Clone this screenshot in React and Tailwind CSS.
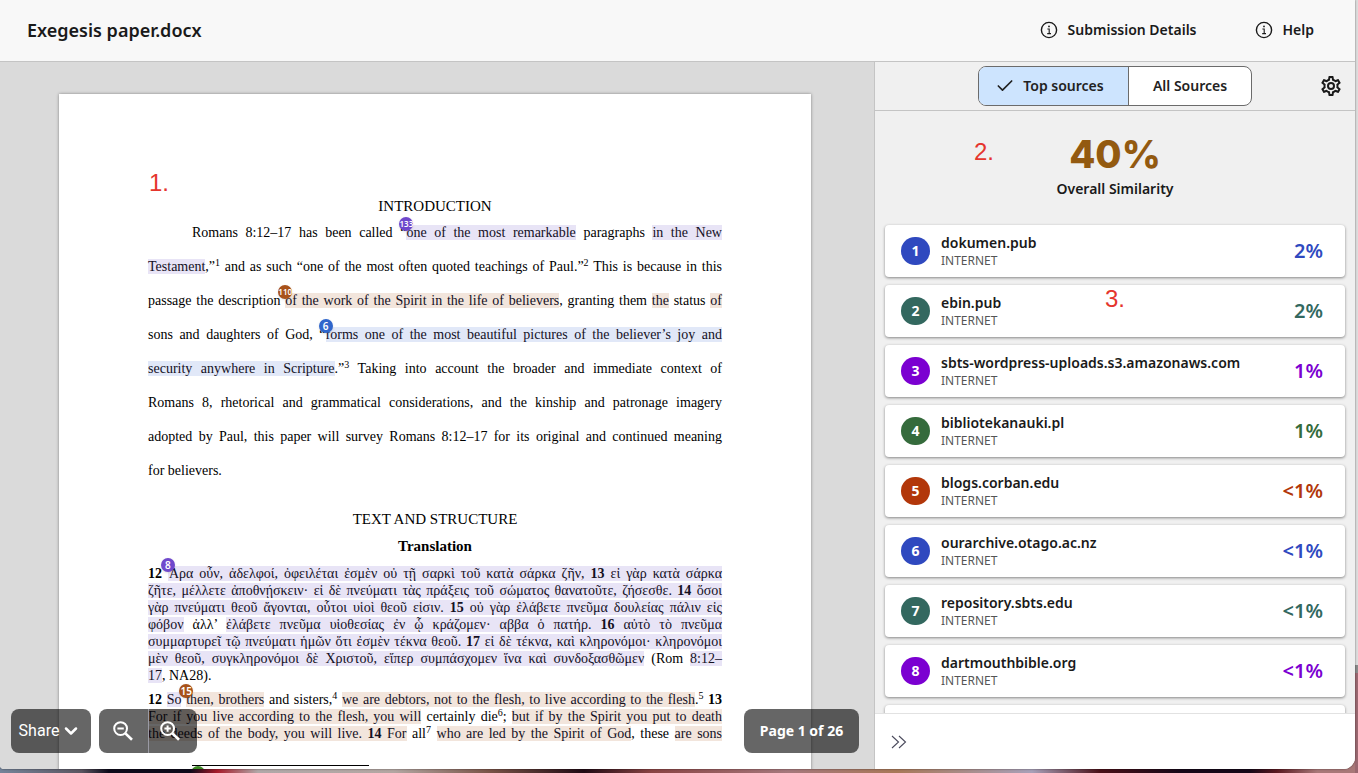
import React from "react";
import { ChevronDown, Check } from "lucide-react";

const SOURCES = [
  { id: 1, name: "dokumen.pub", pct: "2%", dot: "bg-[#2f49bf]", text: "text-[#2f49bf]" },
  { id: 2, name: "ebin.pub", pct: "2%", dot: "bg-[#33685f]", text: "text-[#33685f]" },
  { id: 3, name: "sbts-wordpress-uploads.s3.amazonaws.com", pct: "1%", dot: "bg-[#7b00d1]", text: "text-[#7b00d1]" },
  { id: 4, name: "bibliotekanauki.pl", pct: "1%", dot: "bg-[#356b3c]", text: "text-[#356b3c]" },
  { id: 5, name: "blogs.corban.edu", pct: "<1%", dot: "bg-[#b2370a]", text: "text-[#b2370a]" },
  { id: 6, name: "ourarchive.otago.ac.nz", pct: "<1%", dot: "bg-[#2f49bf]", text: "text-[#2f49bf]" },
  { id: 7, name: "repository.sbts.edu", pct: "<1%", dot: "bg-[#33685f]", text: "text-[#33685f]" },
  { id: 8, name: "dartmouthbible.org", pct: "<1%", dot: "bg-[#7b00d1]", text: "text-[#7b00d1]" },
];

const TONES = {
  purple: "bg-[#e8e4f6]",
  brown: "bg-[#f2e5dc]",
  blue: "bg-[#e1e8f8]",
};

function Mark({ tone, children }) {
  return <mark className={`text-[#14101f] ${TONES[tone]}`}>{children}</mark>;
}

// numbered marker that hangs over the first letter of a match
function Badge({ n, color }) {
  return (
    <span className="relative">
      <button
        className={`absolute -top-px left-0 z-10 flex size-[14px] -translate-x-1/2 -translate-y-1/2 items-center justify-center rounded-full font-['Noto_Sans',sans-serif] leading-none font-semibold text-white shadow-sm ${
          n > 99 ? "text-[8px]" : "text-[10px]"
        } ${color}`}
      >
        {n}
      </button>
    </span>
  );
}

function Line({ children, tall, indent, last }) {
  return (
    <div
      className={`whitespace-nowrap ${tall ? "leading-[34px]" : "leading-[17px]"} ${indent ? "pl-11" : ""} ${
        last ? "text-left" : "text-justify [text-align-last:justify]"
      }`}
    >
      {children}
    </div>
  );
}

function Sup({ children }) {
  return <sup className="text-[10px] leading-none">{children}</sup>;
}

function InfoIcon() {
  return (
    <svg viewBox="0 0 18 18" className="size-[18px]" fill="none" stroke="currentColor">
      <circle cx="9" cy="9" r="7.6" strokeWidth="1.4" />
      <path d="M7.4 8h1.8v4.5M7.2 12.6h3.8" strokeWidth="1.1" />
      <circle cx="9" cy="5.4" r=".9" fill="currentColor" stroke="none" />
    </svg>
  );
}

function GearIcon() {
  return (
    <svg viewBox="0 0 24 24" className="size-6" fill="currentColor">
      <path d="M19.43 12.98c.04-.32.07-.64.07-.98s-.03-.66-.07-.98l2.11-1.65c.19-.15.24-.42.12-.64l-2-3.46a.5.5 0 0 0-.61-.22l-2.49 1a7.3 7.3 0 0 0-1.69-.98l-.38-2.65A.49.49 0 0 0 14 2h-4a.49.49 0 0 0-.49.42l-.38 2.65c-.61.25-1.17.59-1.69.98l-2.49-1a.5.5 0 0 0-.61.22l-2 3.46a.49.49 0 0 0 .12.64l2.11 1.65c-.04.32-.07.65-.07.98s.03.66.07.98l-2.11 1.65a.49.49 0 0 0-.12.64l2 3.46c.12.22.39.3.61.22l2.49-1c.52.4 1.08.73 1.69.98l.38 2.65c.03.24.24.42.49.42h4c.25 0 .46-.18.49-.42l.38-2.65c.61-.25 1.17-.59 1.69-.98l2.49 1c.23.09.49 0 .61-.22l2-3.46a.49.49 0 0 0-.12-.64zm-1.98-1.71c.04.31.05.52.05.73s-.02.43-.05.73l-.14 1.13.89.7 1.08.84-.7 1.21-1.27-.51-1.04-.42-.9.68c-.43.32-.84.56-1.25.73l-1.06.43-.16 1.13-.2 1.35h-1.4l-.19-1.35-.16-1.13-1.06-.43a5.7 5.7 0 0 1-1.23-.71l-.91-.7-1.06.43-1.27.51-.7-1.21 1.08-.84.89-.7-.14-1.13a7 7 0 0 1-.05-.74c0-.2.02-.43.05-.73l.14-1.13-.89-.7-1.08-.84.7-1.21 1.27.51 1.04.42.9-.68c.43-.32.84-.56 1.25-.73l1.06-.43.16-1.13.2-1.35h1.39l.19 1.35.16 1.13 1.06.43c.43.18.83.41 1.23.71l.91.7 1.06-.43 1.27-.51.7 1.21-1.07.85-.89.7zM12 8a4 4 0 1 0 0 8 4 4 0 0 0 0-8m0 6a2 2 0 1 1 0-4 2 2 0 0 1 0 4" />
    </svg>
  );
}

function ZoomIcon({ plus }) {
  return (
    <svg viewBox="0 0 20 20" className="size-5" fill="none" stroke="currentColor" strokeWidth="2">
      <circle cx="7.6" cy="7.6" r="6.4" />
      <path d="M12.4 12.4l6.6 6.4" strokeWidth="2.6" />
      <path d={plus ? "M4.4 7.6h6.4M7.6 4.4v6.4" : "M4.4 7.6h6.4"} />
    </svg>
  );
}

function Paper() {
  return (
    <article className="relative mt-8 mr-[63px] ml-[59px] h-[1000px] min-w-0 flex-1 bg-white px-[89px] pt-[103px] font-['Liberation_Serif',serif] text-sm text-black shadow-[0_0_3px_rgba(0,0,0,0.4)]">
      <span className="absolute top-[75px] left-[90px] font-['Liberation_Sans',sans-serif] text-2xl leading-7 text-[#e5352d]">1.</span>

      <h2 className="text-center text-[15px] leading-[19px]">INTRODUCTION</h2>
      <section>
        <Line tall indent>
          Romans 8:12–17 has been called “<Badge n={133} color="bg-[#6f48cc]" />
          <Mark tone="purple">one of the most remarkable</Mark> paragraphs <Mark tone="purple">in the New</Mark>
        </Line>
        <Line tall>
          <Mark tone="purple">Testament</Mark>,”<Sup>1</Sup> and as such “one of the most often quoted teachings of Paul.”<Sup>2</Sup> This is because in this
        </Line>
        <Line tall>
          passage the description <Badge n={110} color="bg-[#a8521a]" />
          <Mark tone="brown">of the work of the Spirit in the life of believers</Mark>, granting them <Mark tone="brown">the</Mark> status <Mark tone="brown">of</Mark>
        </Line>
        <Line tall>
          sons and daughters of God, “<Badge n={6} color="bg-[#2f66cc]" />
          <Mark tone="blue">forms one of the most beautiful pictures of the believer’s joy and</Mark>
        </Line>
        <Line tall>
          <Mark tone="blue">security anywhere in Scripture</Mark>.”<Sup>3</Sup> Taking into account the broader and immediate context of
        </Line>
        <Line tall>Romans 8, rhetorical and grammatical considerations, and the kinship and patronage imagery</Line>
        <Line tall>adopted by Paul, this paper will survey Romans 8:12–17 for its original and continued meaning</Line>
        <Line tall last>for believers.</Line>
      </section>

      <h2 className="mt-[23px] text-center text-[15px] leading-[17px]">TEXT AND STRUCTURE</h2>
      <h3 className="mt-[10px] text-center text-[15px] leading-[17px] font-bold">Translation</h3>

      <section className="mt-[10px]" lang="el">
        <Line>
          <b>12</b> <Badge n={8} color="bg-[#6f48cc]" />
          <Mark tone="purple">Ἄρα οὖν, ἀδελφοί, ὀφειλέται ἐσμὲν οὐ τῇ σαρκὶ τοῦ κατὰ σάρκα ζῆν, <b>13</b> εἰ γὰρ κατὰ σάρκα</Mark>
        </Line>
        <Line>
          <Mark tone="purple">ζῆτε, μέλλετε ἀποθνῄσκειν· εἰ δὲ πνεύματι τὰς πράξεις τοῦ σώματος θανατοῦτε, ζήσεσθε. <b>14</b> ὅσοι</Mark>
        </Line>
        <Line>
          <Mark tone="purple">γὰρ πνεύματι θεοῦ ἄγονται, οὗτοι υἱοὶ θεοῦ εἰσιν. <b>15</b> οὐ γὰρ ἐλάβετε πνεῦμα δουλείας πάλιν εἰς</Mark>
        </Line>
        <Line>
          <Mark tone="purple">φόβον</Mark> ἀλλ’ <Mark tone="purple">ἐλάβετε πνεῦμα υἱοθεσίας ἐν ᾧ κράζομεν· αββα ὁ πατήρ. <b>16</b> αὐτὸ τὸ πνεῦμα</Mark>
        </Line>
        <Line>
          <Mark tone="purple">συμμαρτυρεῖ τῷ πνεύματι ἡμῶν ὅτι ἐσμὲν τέκνα θεοῦ. <b>17</b> εἰ δὲ τέκνα, καὶ κληρονόμοι· κληρονόμοι</Mark>
        </Line>
        <Line>
          <Mark tone="purple">μὲν θεοῦ, συγκληρονόμοι δὲ Χριστοῦ, εἴπερ συμπάσχομεν ἵνα καὶ συνδοξασθῶμεν</Mark> (Rom <Mark tone="purple">8:12–</Mark>
        </Line>
        <Line last>
          <Mark tone="purple">17</Mark>, NA28).
        </Line>
      </section>

      <section className="mt-[7px]">
        <Line>
          <b>12</b> <Mark tone="purple">So</Mark> <Badge n={15} color="bg-[#a8521a]" />
          <Mark tone="brown">then, brothers</Mark> and sisters,<Sup>4</Sup> <Mark tone="brown">we are debtors, not to the flesh, to live according to the flesh</Mark>.<Sup>5</Sup> <b>13</b>
        </Line>
        <Line>
          <Mark tone="brown">For if you live according to the flesh, you will</Mark> certainly die<Sup>6</Sup>; <Mark tone="brown">but if by the Spirit you put to death</Mark>
        </Line>
        <Line>
          <Mark tone="brown">the deeds of the body, you will live. <b>14</b> For</Mark> all<Sup>7</Sup> <Mark tone="brown">who are led by the Spirit of God</Mark>, these <Mark tone="brown">are sons</Mark>
        </Line>
      </section>

      <div className="mt-[23px] ml-11 w-[177px] border-t border-black pt-2 pl-[6px] leading-[17px]">
        <Badge color="bg-[#3c8a24]" />
      </div>
    </article>
  );
}

function SourceCard({ source }) {
  return (
    <li>
      <button className="flex h-[52px] w-full items-center rounded bg-white pr-[22px] pl-4 text-left shadow-[0_1px_3px_rgba(0,0,0,0.45)]">
        <span className={`flex h-7 w-[29px] items-center justify-center rounded-full text-sm font-bold text-white ${source.dot}`}>
          {source.id}
        </span>
        <span className="ml-[11px] flex flex-1 flex-col pt-[2px] leading-[18px]">
          <span className="text-sm leading-[18px] font-semibold text-[#1a1a1a]">{source.name}</span>
          <span className="text-xs leading-[18px] text-[#555]">INTERNET</span>
        </span>
        <span className={`text-xl font-semibold ${source.text}`}>{source.pct}</span>
      </button>
    </li>
  );
}

function Sidebar() {
  return (
    <aside className="flex w-[481px] shrink-0 flex-col border-l border-[#c4c4c4] bg-[#f0f0f0]">
      <div className="grid h-[49px] shrink-0 grid-cols-[1fr_auto_1fr] items-center border-b border-[#c4c4c4]">
        <div />
        <div className="flex h-10 overflow-hidden rounded-lg border border-[#6b6b6b] bg-white text-sm font-semibold text-[#222]">
          <button className="flex w-[150px] items-center justify-center gap-2 border-r border-[#6b6b6b] bg-[#cde4fe] pr-2">
            <Check className="size-5" strokeWidth={2} />
            Top sources
          </button>
          <button className="w-[122px]">All Sources</button>
        </div>
        <button aria-label="Settings" className="mr-3 justify-self-end text-[#1a1a1a]">
          <GearIcon />
        </button>
      </div>

      <div className="relative min-h-0 flex-1 overflow-hidden px-[10px]">
        <span className="absolute top-[27px] left-[99px] font-['Liberation_Sans',sans-serif] text-2xl leading-7 text-[#e5352d]">2.</span>
        <div className="flex h-[114px] flex-col items-center pt-[21px]">
          <div className="font-['Inter',sans-serif] text-[38px] leading-[44px] font-extrabold text-[#935a10]">40%</div>
          <div className="mt-[3px] text-sm leading-5 font-semibold text-[#1a1a1a]">Overall Similarity</div>
        </div>
        <ul className="flex flex-col gap-2">
          {SOURCES.map((s) => (
            <SourceCard key={s.id} source={s} />
          ))}
          {/* next row, not loaded yet */}
          <li className="h-[52px] rounded bg-white shadow-[0_1px_3px_rgba(0,0,0,0.45)]" />
        </ul>
        <span className="absolute top-[174px] left-[230px] font-['Liberation_Sans',sans-serif] text-2xl leading-7 text-[#e5352d]">3.</span>
      </div>

      <div className="flex h-14 shrink-0 items-center border-t border-[#e2e2e2] bg-white pl-4">
        <button aria-label="Collapse panel" className="text-[#4a4a5c]">
          <svg viewBox="0 0 16 14" className="h-[14px] w-4" fill="none" stroke="currentColor" strokeWidth="1.1">
            <path d="M1 1l6.5 6L1 13M8 1l6.5 6L8 13" />
          </svg>
        </button>
      </div>
    </aside>
  );
}

export default function App() {
  return (
    <div className="h-screen overflow-hidden bg-[linear-gradient(to_right,#75849a,#5a5560_6%,#0d0a1a_8%,#0d0a1a_14%,#a81c2c_16%,#b0a8a8_19%,#b3a6a2_29%,#7a5448_36%,#200a14_43%,#8a4444_48%,#a5787c_58%,#a87858_66%,#a8a0b8_76%,#4a1018_81%,#150818_87%,#150818_92%,#5a1820_94%,#a87878_97%)] font-['Noto_Sans',sans-serif]">
      <div className="h-full bg-[linear-gradient(to_bottom,#dcdcdc_86%,#8a8a8a_86%,#8a8a8a_87%,#9a6870_87%)] bg-[length:3px_100%] bg-right bg-no-repeat pr-[3px] pb-1">
        <div className="flex h-full flex-col overflow-hidden rounded-br-xl rounded-bl bg-[#f8f8f8] shadow-[0_0_2px_rgba(0,0,0,0.6)]">
          <header className="flex h-[62px] shrink-0 items-center border-b border-[#c4c4c4] pr-[41px] pb-[2px] pl-[27px] text-[#1a1a1a]">
            <h1 className="flex-1 text-lg font-semibold">Exegesis paper.docx</h1>
            <nav className="flex gap-[58px] text-sm font-semibold">
              <button className="flex items-center gap-[10px]">
                <InfoIcon />
                Submission Details
              </button>
              <button className="flex items-center gap-[10px]">
                <InfoIcon />
                Help
              </button>
            </nav>
          </header>

          <div className="flex min-h-0 flex-1">
            <main className="relative flex min-w-0 flex-1 items-start overflow-hidden bg-[#dadada]">
              <Paper />
              {/* floating controls */}
              <div className="absolute inset-x-0 bottom-4 z-20 flex items-center gap-2 pr-[15px] pl-[11px] text-white">
                <button className="flex h-11 w-20 items-center justify-center gap-[2px] rounded-lg bg-black/60 pr-[2px] font-['Roboto',sans-serif] text-base">
                  Share
                  <ChevronDown className="size-5" strokeWidth={3} />
                </button>
                <div className="flex h-11 overflow-hidden rounded-lg bg-black/60">
                  <button aria-label="Zoom out" className="flex w-[49px] items-center justify-center pr-[2px]">
                    <ZoomIcon />
                  </button>
                  <button aria-label="Zoom in" className="flex w-[49px] items-center border-l border-[#9a9aa4] pl-[11px]">
                    <ZoomIcon plus />
                  </button>
                </div>
                <div className="ml-auto flex h-11 w-[115px] items-center justify-center rounded-lg bg-black/60 text-sm font-bold">
                  Page 1 of 26
                </div>
              </div>
            </main>
            <Sidebar />
          </div>
        </div>
      </div>
    </div>
  );
}
